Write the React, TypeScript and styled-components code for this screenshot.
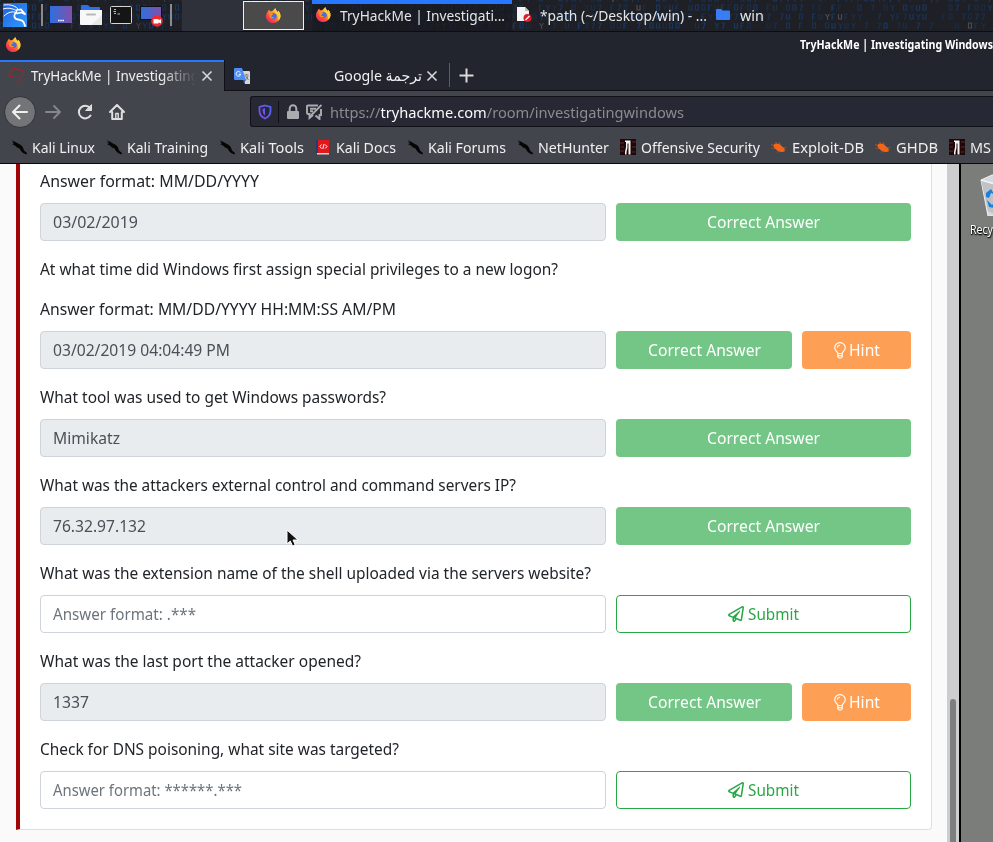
import React, { useLayoutEffect, useRef } from "react";
import styled, { createGlobalStyle, css } from "styled-components";
import { FaRegPaperPlane } from "react-icons/fa";

const Global = createGlobalStyle`
  * { box-sizing: border-box; }
  html, body { margin: 0; overflow: hidden; }
  body { font-family: "Noto Sans", "DejaVu Sans", sans-serif; background: #fafafa; }
`;

const Slot = styled.span<{ $w: number }>`
  display: block;
  flex: none;
  width: ${(p) => p.$w}px;
  white-space: pre;
`;
const Ink = styled.span`
  display: inline-block;
  transform-origin: left center;
`;

/* Text run squeezed or stretched to a set width. */
function Label({ w, children, rtl }: { w: number; children: React.ReactNode; rtl?: boolean }) {
  const ref = useRef<HTMLSpanElement>(null);
  useLayoutEffect(() => {
    const el = ref.current;
    if (el && el.offsetWidth) {
      el.style.transform = "none";
      el.style.transform = `scaleX(${w / el.getBoundingClientRect().width})`;
    }
  }, [w]);
  return (
    <Slot $w={w}>
      <Ink ref={ref} dir={rtl ? "rtl" : "ltr"}>{children}</Ink>
    </Slot>
  );
}

const Screen = styled.div`
  width: 993px;
  height: 842px;
  display: flex;
  flex-direction: column;
  overflow: hidden;
  background: #fafafa;
`;

/* ---------- desktop panel ---------- */
const Panel = styled.div`
  display: grid;
  flex: none;
  height: 32px;
  background: #1e2026;
  border-bottom: 1px solid #0c0d10;
  overflow: hidden;
  > * { grid-area: 1 / 1; }
`;
const PanelRow = styled.div`
  display: flex;
  height: 31px;
  color: #e4e5e7;
  font-size: 14.7px;
  line-height: 28px;
`;
const Launchers = styled.div`
  display: flex;
  align-items: center;
  width: 182px;
  padding: 0 0 1px 3px;
  flex: none;
`;
const Bar = styled.i<{ $l: number; $r: number }>`
  width: 2px;
  height: 22px;
  margin: 0 ${(p) => p.$r}px 0 ${(p) => p.$l}px;
  background: #8a8b8e;
`;
const Pager = styled.div`
  width: 61px;
  background: #2e303a;
  flex: none;
`;
const Workspace = styled.div`
  display: flex;
  align-items: center;
  justify-content: center;
  width: 61px;
  height: 29px;
  margin-top: 1px;
  border: 1px solid #f0f0f0;
  background: #4a4a4a;
  flex: none;
`;
const Task = styled.div<{ $active?: boolean; $w: number; $gap: number; $l: number }>`
  display: flex;
  align-items: center;
  gap: ${(p) => p.$gap}px;
  width: ${(p) => p.$w}px;
  padding: 0 0 2px ${(p) => p.$l}px;
  flex: none;
  ${(p) =>
    p.$active &&
    css`
      margin-left: 8px;
      background: #17191ea8;
      box-shadow: inset 0 4px #2777ff;
    `}
`;

function Matrix() {
  const marks: React.ReactNode[] = [];
  let s = 90417;
  const rnd = () => ((s = (s * 16807) % 2147483647) / 2147483647);
  for (let row = 0; row < 4; row++)
    for (let x = 0; x < 993; x += 6.5) {
      if (rnd() < 0.32) continue;
      const y = row * 9 - 4;
      const shapes = ["h3v5h-3z", "v6m0-6h3m-3 3h2", "l2 3l2-3m-2 3v3", "h3l-2 6", "v5h3v-5"];
      const shape = shapes[Math.floor(rnd() * shapes.length)];
      const pale = rnd() < 0.03;
      marks.push(
        <path
          key={`${row}-${x}`}
          d={`M${x.toFixed(1)} ${y}${shape}`}
          stroke={pale ? "#5d5e60" : "#173d70"}
          opacity={0.35 + rnd() * 0.5}
        />
      );
    }
  return (
    <svg width="993" height="31" fill="none" strokeWidth="1.2">
      {marks}
    </svg>
  );
}

function Firefox({ size = 15 }: { size?: number }) {
  return (
    <svg width={size} height={size} viewBox="0 0 32 32">
      <defs>
        <linearGradient id="fxo" x1="1" y1="0" x2="0.2" y2="1">
          <stop offset="0" stopColor="#ffe34a" />
          <stop offset=".45" stopColor="#ff9a26" />
          <stop offset=".75" stopColor="#fb4545" />
          <stop offset="1" stopColor="#e5285c" />
        </linearGradient>
      </defs>
      <path d="M3 9C4 6 6 4 7 3C7 6 9 7 12 7C14 7 16 4 20 0C20 5 24 6 25 9L26 6C31 11 32 17 30 22C27 29 22 32 15 32C7 32 1 26 0 19C0 14 1 11 3 9Z" fill="url(#fxo)" />
      <path d="M20 0C20 5 24 6 25 9L26 6C31 11 32 17 30 22C29 25 27 26 25 27C27 20 25 14 20 11C17 8 17 4 20 0Z" fill="#ffcb3f" />
      <path d="M10 12C15 9 23 12 23 17C23 23 17 25 12 22C9 20 8 15 10 12Z" fill="#3f6fe0" />
      <path d="M7 11C10 9 14 11 16 14C13 15 12 16 11 18C13 20 16 19 18 19C15 23 9 23 7 18Z" fill="#ff8a2a" />
    </svg>
  );
}

const Launch = styled.svg`
  flex: none;
  display: block;
`;

function LauncherIcons() {
  return (
    <Launchers>
      <Launch width="24" height="24" viewBox="0 0 24 24">
        <defs>
          <linearGradient id="kg" x1="0" y1="0" x2="1" y2="1">
            <stop offset="0" stopColor="#2460da" />
            <stop offset="1" stopColor="#2d9bff" />
          </linearGradient>
          <linearGradient id="dg">
            <stop offset="0" stopColor="#2d6fe0" />
            <stop offset="1" stopColor="#8151a9" />
          </linearGradient>
        </defs>
        <path d="M0 0h24v24H0z" fill="url(#kg)" />
        <g fill="none" stroke="#fff" strokeLinecap="round">
          <path d="M1 2C8 1 13 3 16 7M0 6C6 4 11 6 14 8M1 13C5 9 10 8 13 9.500" strokeWidth="1" />
          <path d="M13.500 9C10 12 11 16 15 16.500C19 17 21 18 22 23" strokeWidth="1.800" />
          <path d="M13.500 7L18 6.500L22.500 11.500L18.500 9.500L14 10.500" strokeWidth="1.700" />
        </g>
      </Launch>
      <Bar $l={14} $r={7} />
      <Launch width="22" height="18" viewBox="0 0 22 18">
        <path d="M0 0h22v17H0z" fill="url(#dg)" />
        <path d="M8 14.500h6" stroke="#fff" strokeWidth="1.500" strokeDasharray="1.600 .6" />
      </Launch>
      <Launch width="30" height="22" viewBox="0 0 30 22">
        <path d="M9 10V2q0-1 1-1h6l2 2h9q1 0 1 1v6z" fill="#2f6fe4" />
        <path d="M8 6h22v14q0 1-1 1H9q-1 0-1-1z" fill="#f8f8f8" />
        <path d="M30 11v9q0 1-1 1H19z" fill="#e8e8e8" />
        <path d="M15 10.500h8" stroke="#b9b9b9" strokeWidth="2" strokeLinecap="round" />
      </Launch>
      <Launch width="30" height="20" viewBox="0 0 30 20">
        <rect x="8.500" y="1.500" width="21" height="17" rx="1" fill="#151515" stroke="#d4d4d4" />
        <path d="M12 4.500h2M11.500 6.500h2.500M12 8.500h2M15.500 9h2.500" stroke="#bdbdbd" />
      </Launch>
      <Launch width="31" height="24" viewBox="0 0 31 24">
        <path d="M8 3h22v14H8z" fill="#101014" />
        <path d="M9 4h20v12H9z" fill="url(#dg)" />
        <circle cx="25" cy="18" r="5.800" fill="#ee2b2f" />
        <path d="M21.500 16h5v1.300l2.500-1.300v4.500l-2.500-1.300v1.300h-5z" fill="#fff" />
      </Launch>
      <Bar $l={7} $r={0} />
    </Launchers>
  );
}

/* ---------- browser chrome ---------- */
const TitleBar = styled.div`
  display: flex;
  align-items: center;
  justify-content: space-between;
  height: 28px;
  flex: none;
  padding: 0 0 3px 6px;
  background: #22252e;
  color: #fff;
  font-size: 12px;
  font-weight: 700;
  overflow: hidden;
`;
const Tabs = styled.div`
  display: flex;
  height: 31px;
  flex: none;
  background: #22242e;
  color: #f0f0f1;
  font-size: 14.7px;
  line-height: 29px;
`;
const ActiveTab = styled.div`
  display: flex;
  align-items: center;
  width: 224px;
  padding: 0 11px 0 8px;
  background: #42454c;
  box-shadow: inset 0 2px #2777ff;
`;
const Faded = styled.div`
  width: 167px;
  margin-left: 6px;
  overflow: hidden;
  mask-image: linear-gradient(90deg, #000 130px, transparent 165px);
`;
const OtherTab = styled.div`
  display: flex;
  align-items: center;
  width: 225px;
  height: 31px;
  padding: 1px 11px 0 9px;
  border-left: 1px solid #101116;
  border-bottom: 1px solid #111218;
`;
const Spring = styled.i`
  flex: 1;
`;
const NewTab = styled.div`
  display: flex;
  align-items: center;
  flex: 1;
  border-bottom: 1px solid #111218;
`;
const TabLine = styled.i`
  width: 1px;
  height: 24px;
  margin-right: 9px;
  background: #5b5d64;
`;
const Toolbar = styled.div`
  display: flex;
  align-items: center;
  height: 40px;
  flex: none;
  padding: 0 0 0 4px;
  background: #42454c;
`;
const Back = styled.div`
  display: flex;
  align-items: center;
  justify-content: center;
  width: 32px;
  height: 32px;
  border: 1px solid #303238;
  border-radius: 50%;
  background: #737477;
  margin-top: 2px;
`;
const NavIcon = styled.svg`
  display: block;
  flex: none;
  margin: 2px 0 0 16px;
`;
const UrlBar = styled.div`
  display: flex;
  align-items: center;
  flex: 1;
  height: 31px;
  margin: 1px 0 0 125px;
  padding-left: 7px;
  border: 1px solid #111218;
  border-right: 0;
  border-radius: 3px 0 0 3px;
  background: #262833;
  color: #8b8c91;
  font-size: 14.7px;
  line-height: 28px;
`;
const Host = styled.span`
  color: #fafafa;
`;
const UrlLine = styled.i`
  width: 1px;
  height: 22px;
  margin: 0 7px 0 6px;
  background: #0f1014;
`;
const UrlIcon = styled.svg<{ $r?: number }>`
  flex: none;
  margin-right: ${(p) => p.$r ?? 0}px;
`;
const Bookmarks = styled.div`
  display: flex;
  gap: 11px;
  height: 33px;
  flex: none;
  padding-left: 11px;
  background: #42454c;
  border-bottom: 1px solid #08090b;
  color: #f0f0f1;
  font-size: 14.7px;
  line-height: 32px;
  overflow: hidden;
`;
const Bookmark = styled.div`
  display: flex;
  align-items: center;
  gap: 5px;
  flex: none;
`;

type Kind = "kali" | "docs" | "offsec" | "bug";
function BookmarkIcon({ kind }: { kind: Kind }) {
  return (
    <Launch width="16" height="16" viewBox="0 0 16 16">
      {kind === "kali" && (
        <path d="M.5 1L4.500 3L7 4.500L10 6L12 8.500L13 11.500L16 14L15.500 15.500L12 14L10 12L8.500 9.500L6 8.500L4 6.500L1 5.500L3 5L1 3.500L3 3.500Z" fill="#050505" />
      )}
      {kind === "docs" && (
        <>
          <path d="M1 1h2v13H1z" fill="#243c73" />
          <path d="M3 1h11v13H3z" fill="#e2191c" />
          <path d="M2 14h12v1.500H2z" fill="#d9d9d9" />
          <path d="M6.500 5.500L4.800 7.500l1.700 2M9 5l-1.200 5M10.200 5.500l1.800 2-1.800 2" stroke="#fff" fill="none" />
        </>
      )}
      {kind === "offsec" && (
        <>
          <path d="M0 0h16v16H0z" fill="#1e0809" />
          <path d="M0 4h4M12 3h4M1 8h3M12 8h4M0 12h4M12 13h3" stroke="#5d2929" />
          <path d="M5 1.500h5.500V15.500H8.500V4.500H7.500V9L6.500 13V15.500H5V13L6 8V3H5z" fill="#f5f5f5" />
        </>
      )}
      {kind === "bug" && (
        <>
          <path d="M2.500 6C5 3.500 9 4.500 11 7.500C13.500 9 14.500 11 13.500 12.500C10 13.500 7 12.500 5 10.500C3 9.500 2.500 7.500 2.500 6Z" fill="#f56416" />
          <path d="M6 5L4.500 3M9 5.500L8 3M12 8.500l3.500.5M8 12l-2 1.500M4 9L.5 9.500M3 6.500L0 5.500" stroke="#b3592f" strokeWidth=".8" />
        </>
      )}
    </Launch>
  );
}

const bookmarks: [Kind, string, number][] = [
  ["kali", "Kali Linux", 63],
  ["kali", "Kali Training", 81],
  ["kali", "Kali Tools", 64],
  ["docs", "Kali Docs", 60],
  ["kali", "Kali Forums", 78],
  ["kali", "NetHunter", 71],
  ["offsec", "Offensive Security", 119],
  ["bug", "Exploit-DB", 72],
  ["bug", "GHDB", 42],
  ["offsec", "MS", 21],
];

function Close() {
  return (
    <Launch width="12" height="12" viewBox="0 0 12 12">
      <path d="M1.500 1.500l9 9m0-9l-9 9" stroke="#d8d8d9" strokeWidth="1.600" />
    </Launch>
  );
}

/* ---------- page ---------- */
const Viewport = styled.div`
  display: flex;
  flex: 1;
  min-height: 0;
`;
const Page = styled.main`
  width: 947px;
  padding-left: 16px;
  background: #fafafa;
  font-size: 16px;
  color: #212529;
`;
const Card = styled.section`
  width: 916px;
  height: 666px;
  padding: 5px 20px 0;
  border: 1px solid #dfdfdf;
  border-left: 4px solid #a00606;
  border-top: 0;
  border-radius: 0 0 4px 0;
  background: #fff;
`;
const Question = styled.p<{ $gap?: number }>`
  margin: 0 0 ${(p) => p.$gap ?? 10}px;
  line-height: 24px;
  height: 24px;
`;
const Row = styled.div`
  display: flex;
  gap: 10px;
  width: 871px;
  height: 38px;
  margin-bottom: 16px;
`;
const Field = styled.div<{ $done: boolean }>`
  display: flex;
  width: 566px;
  padding: 0 12px;
  line-height: 36px;
  border: 1px solid #ced4da;
  border-radius: 4px;
  background: ${(p) => (p.$done ? "#e9ecef" : "#fff")};
  color: ${(p) => (p.$done ? "#495057" : "#6c757d")};
`;
const Button = styled.div<{ $kind: "ok" | "hint" | "submit" }>`
  display: flex;
  align-items: center;
  justify-content: center;
  gap: 4px;
  border-radius: 4px;
  line-height: 36px;
  border: 1px solid transparent;
  color: #fff;
  ${(p) => p.$kind === "ok" && css`flex: 1; background: #73c686; background-clip: border-box;`}
  ${(p) => p.$kind === "hint" && css`width: 109px; gap: 3px; background: #fda056;`}
  ${(p) => p.$kind === "submit" && css`flex: 1; color: #28a745; border-color: #28a745;`}
`;

type Item = { q: [string, number][]; a: string; w: number; done?: boolean; hint?: boolean };
const items: Item[] = [
  { q: [["Answer format: MM/DD/YYYY", 219]], a: "03/02/2019", w: 85, done: true },
  {
    q: [
      ["At what time did Windows first assign special privileges to a new logon?", 518],
      ["Answer format: MM/DD/YYYY HH:MM:SS AM/PM", 356],
    ],
    a: "03/02/2019 04:04:49 PM",
    w: 177,
    done: true,
    hint: true,
  },
  { q: [["What tool was used to get Windows passwords?", 346]], a: "Mimikatz", w: 67, done: true },
  { q: [["What was the attackers external control and command servers IP?", 476]], a: "76.32.97.132", w: 93, done: true },
  { q: [["What was the extension name of the shell uploaded via the servers website?", 551]], a: "Answer format: .***", w: 143 },
  { q: [["What was the last port the attacker opened?", 321]], a: "1337", w: 36, done: true, hint: true },
  { q: [["Check for DNS poisoning, what site was targeted?", 359]], a: "Answer format: ******.***", w: 189 },
];

function Bulb() {
  return (
    <svg width="12" height="17" viewBox="0 0 12 17" fill="none" stroke="#fff" strokeWidth="1.100">
      <path d="M3.800 11.500C3.600 9.500.7 8.500.7 5.700a5.300 5.100 0 0 1 10.600 0C11.300 8.500 8.400 9.500 8.200 11.500zM3.800 11.500v3.200L5 16h2l1.200-1.300v-3.200M3.800 13.600h4.400M3.300 5.700A2.600 2.600 0 0 1 6 3.200" />
    </svg>
  );
}

/* ---------- right edge ---------- */
const ScrollTrack = styled.div`
  width: 12px;
  padding: 535px 0 0 3px;
  background: #cdcdcf;
`;
const Thumb = styled.div`
  width: 6px;
  height: 160px;
  border-radius: 3px;
  background: #7c7e80;
`;
const Remote = styled.div`
  display: flex;
  flex-direction: column;
  flex: 1;
  padding: 10px 0 0 9px;
  overflow: hidden;
  border-left: 2px solid #000;
  background: #7b7d7a;
  color: #fff;
  font: 12px "Noto Sans", sans-serif;
  line-height: 17px;
  text-shadow: 1px 1px 2px #000, 0 1px 1px #000;
`;
const Bin = styled.svg`
  display: block;
  flex: none;
  margin: 0 0 5px 10px;
`;
const Pointer = styled.svg`
  position: absolute;
  left: 286px;
  top: 529px;
`;

export default function App() {
  return (
    <>
      <Global />
      <Screen>
        <Panel>
          <Matrix />
          <PanelRow>
            <LauncherIcons />
            <Pager />
            <Workspace><Firefox /></Workspace>
            <Task $active $w={200} $gap={9} $l={4}>
              <Firefox />
              <Label w={165}>TryHackMe | Investigati...</Label>
            </Task>
            <Task $w={204} $gap={8} $l={5}>
              <Launch width="15" height="15" viewBox="0 0 15 15">
                <path d="M0 0h8l4 4v10H0z" fill="#f5f5f5" />
                <path d="M8 0l4 4H8z" fill="#bbb" />
                <circle cx="10.500" cy="11" r="4" fill="#d91f2a" />
                <path d="M8.500 13l4-4" stroke="#fff" strokeWidth="1.300" />
              </Launch>
              <Label w={167}>*path (~/Desktop/win) - ...</Label>
            </Task>
            <Task $w={80} $gap={10} $l={0}>
              <Launch width="14" height="11" viewBox="0 0 14 11">
                <path d="M0 1q0-1 1-1h4l1.500 1.500H13q1 0 1 1V10q0 1-1 1H1q-1 0-1-1z" fill="#397df4" />
              </Launch>
              <Label w={24}>win</Label>
            </Task>
          </PanelRow>
        </Panel>
        <TitleBar>
          <Firefox />
          <Label w={193}>TryHackMe | Investigating Windows</Label>
        </TitleBar>
        <Tabs>
          <ActiveTab>
            <Launch width="17" height="17" viewBox="0 0 17 17" fill="none" stroke="#b21d21">
              <path d="M6 10H3.500A3 3 0 0 1 3 4.500A4 4 0 0 1 10 3A3.500 3.500 0 0 1 15 7.500" strokeWidth="1.300" />
              <path d="M8 9h7M11 11h6M8 13h4M10 15h6" stroke="#70363b" strokeDasharray="3 1" />
            </Launch>
            <Faded><Label w={168}>TryHackMe | Investigating</Label></Faded>
            <Spring />
            <Close />
          </ActiveTab>
          <OtherTab>
            <Launch width="16" height="16" viewBox="0 0 16 16">
              <path d="M7 3h8q1 0 1 1v12h-5z" fill="#d6d6d4" />
              <path d="M1 0h7l4 12H1q-1 0-1-1V1q0-1 1-1z" fill="#4d8df5" />
              <path d="M9 12h3l-2 3z" fill="#2b61cc" />
              <path d="M6.300 4.500A2.300 2.300 0 1 0 6.700 6.300H4.700" fill="none" stroke="#fff" />
              <path d="M10.500 7h4M12.500 6v1M11.500 8l3 4M14 8q-1 3-2.500 4" fill="none" stroke="#777" />
            </Launch>
            <Spring />
            <Label w={88} rtl>ترجمة Google</Label>
            <Launch width="4" height="12" />
            <Close />
          </OtherTab>
          <NewTab>
            <TabLine />
            <Launch width="15" height="15" viewBox="0 0 15 15">
              <path d="M7.500.5v14M.5 7.500h14" stroke="#dadada" strokeWidth="2" />
            </Launch>
          </NewTab>
        </Tabs>
        <Toolbar>
          <Back>
            <Launch width="16" height="16" viewBox="0 0 16 16" fill="none" stroke="#efefef" strokeWidth="2" strokeLinecap="round" strokeLinejoin="round">
              <path d="M15 8H1.500M7.500 1.500L1 8l6.500 6.500" />
            </Launch>
          </Back>
          <svg width="25" height="18" viewBox="0 0 25 14" fill="none" stroke="#85878b" strokeWidth="1.800" strokeLinecap="round" strokeLinejoin="round">
            <path d="M10 8H24M18 2l6 6-6 6" />
          </svg>
          <NavIcon width="16" height="16" viewBox="0 0 16 16" fill="none" stroke="#dfdfe0" strokeWidth="2" strokeLinecap="round">
            <path d="M13.500 11.500A6.300 6.300 0 1 1 13 4" />
            <path d="M14.500 1v5.500H9z" fill="#dfdfe0" strokeWidth="1" />
          </NavIcon>
          <NavIcon width="16" height="16" viewBox="0 0 16 16" fill="none" stroke="#dfdfe0" strokeWidth="2" strokeLinecap="round" strokeLinejoin="round">
            <path d="M1 8l7-7 7 7M3.200 8v7h9.600V8" />
            <path d="M6.800 15V9.500h2.400V15" strokeWidth="1.400" />
          </NavIcon>
          <UrlBar>
            <UrlIcon width="14" height="16" viewBox="0 0 14 16">
              <defs>
                <linearGradient id="sg" x1="0" y1="1" x2="1" y2="0">
                  <stop stopColor="#8b46ef" /><stop offset="1" stopColor="#4c68ef" />
                </linearGradient>
              </defs>
              <path d="M7 1.500L12.500 3v4Q12.500 12 7 14.500Q1.500 12 1.500 7V3z" fill="none" stroke="url(#sg)" strokeWidth="1.800" />
              <path d="M7 4v7.500Q4.500 10 4.500 5z" fill="#6c55ef" />
            </UrlIcon>
            <UrlLine />
            <UrlIcon $r={6} width="14" height="16" viewBox="0 0 14 16">
              <rect x="1" y="7" width="12" height="8" rx="1" fill="#aaacaf" />
              <path d="M3.700 7V4.500a3.300 3.300 0 0 1 6.600 0V7" fill="none" stroke="#aaacaf" strokeWidth="2" />
            </UrlIcon>
            <UrlIcon $r={8} width="16" height="16" viewBox="0 0 16 16" fill="none" stroke="#aaacaf" strokeWidth="1.900">
              <path d="M12 1.500H2Q1 1.500 1 2.500V9Q1 10 2 10h1.500v4l3.500-3M15 5v6h-1.500v4l-4-3.500M4 4.700h6M4 7.300h3" />
              <path d="M15.500 1L4 12.500" />
            </UrlIcon>
            <Label w={354}>https://<Host>tryhackme.com</Host>/room/investigatingwindows</Label>
          </UrlBar>
        </Toolbar>
        <Bookmarks>
          {bookmarks.map(([kind, text, w]) => (
            <Bookmark key={text}>
              <BookmarkIcon kind={kind} />
              <Label w={w}>{text}</Label>
            </Bookmark>
          ))}
        </Bookmarks>
        <Viewport>
          <Page>
            <Card>
              {items.map((it) => (
                <React.Fragment key={it.q[0][0]}>
                  {it.q.map(([text, w], i) => (
                    <Question key={text} $gap={i < it.q.length - 1 ? 16 : 10}>
                      <Label w={w}>{text}</Label>
                    </Question>
                  ))}
                  <Row>
                    <Field $done={!!it.done}><Label w={it.w}>{it.a}</Label></Field>
                    {it.done ? (
                      <Button $kind="ok"><Label w={113}>Correct Answer</Label></Button>
                    ) : (
                      <Button $kind="submit"><FaRegPaperPlane size={16} /><Label w={51}>Submit</Label></Button>
                    )}
                    {it.hint && <Button $kind="hint"><Bulb /><Label w={31}>Hint</Label></Button>}
                  </Row>
                </React.Fragment>
              ))}
            </Card>
          </Page>
          <ScrollTrack><Thumb /></ScrollTrack>
          <Remote>
            <Bin width="40" height="42" viewBox="0 0 40 42">
              <path d="M1 6L12 1L40 3V42H8Z" fill="#d7dadc" stroke="#eef0f1" />
              <path d="M1 6L16 11L14 40L8 37Z" fill="#bfc3c7" />
              <path d="M1 6L15 10L30 8" stroke="#f4f4f4" fill="none" strokeWidth="1.500" />
              <path d="M6 19l5-4 3 5-3-1-2 5-3-1zM7 26l5 5 3-3v6l-6-1z" fill="#1b80d8" />
            </Bin>
            <Label w={23}>Recy</Label>
          </Remote>
        </Viewport>
      </Screen>
      <Pointer width="14" height="20" viewBox="0 0 14 20">
        <path d="M1 1v14l3.300-3 2.200 5 2.700-1.200L7 11h5z" fill="#111" stroke="#fff" strokeWidth="1" />
      </Pointer>
    </>
  );
}
